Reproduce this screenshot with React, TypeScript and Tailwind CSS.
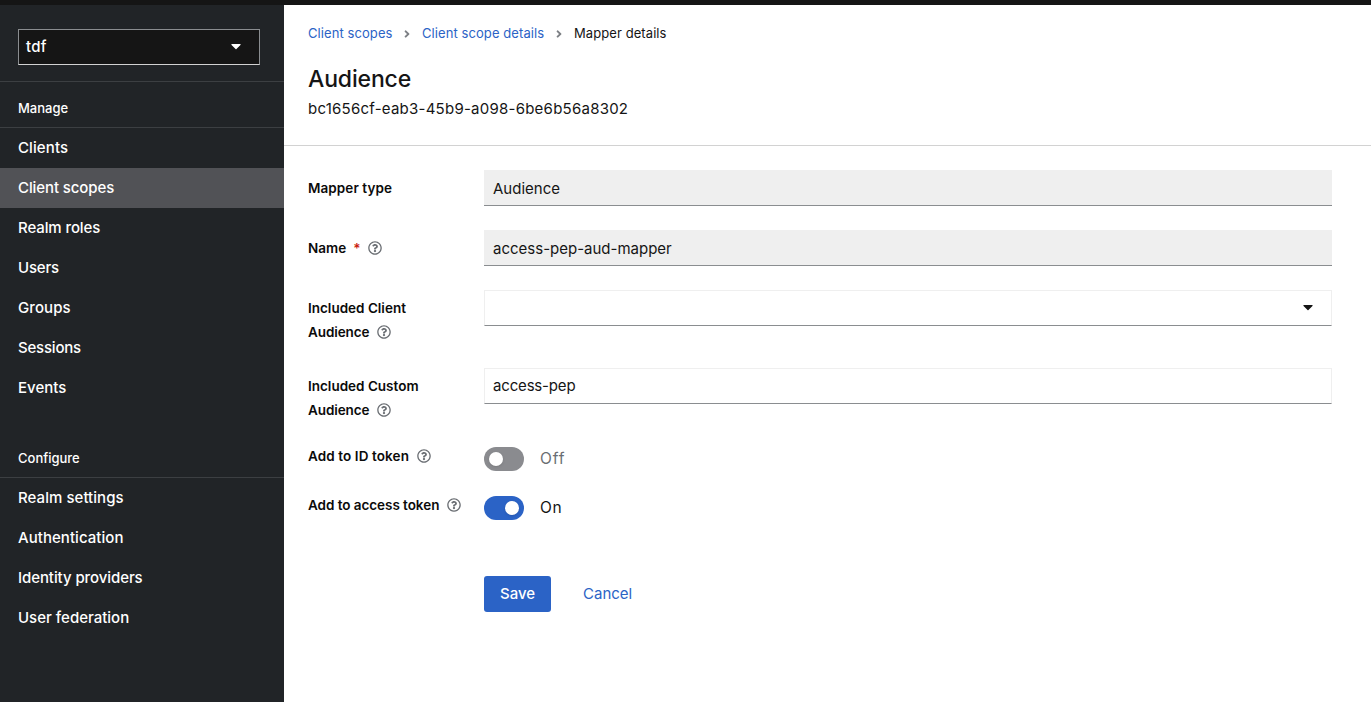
import type { ReactNode } from "react";
import { FaAngleRight, FaCaretDown, FaRegQuestionCircle } from "react-icons/fa";

type Item = { label: string; tracking?: string; active?: boolean };

const manage: Item[] = [
  { label: "Clients", tracking: "tracking-[0.1px]" },
  { label: "Client scopes", tracking: "tracking-[-0.1px]", active: true },
  { label: "Realm roles", tracking: "tracking-[-0.1px]" },
  { label: "Users", tracking: "tracking-[-0.2px]" },
  { label: "Groups", tracking: "tracking-[0.1px]" },
  { label: "Sessions", tracking: "tracking-[-0.2px]" },
  { label: "Events" },
];

const configure: Item[] = [
  { label: "Realm settings", tracking: "tracking-[0.05px]" },
  { label: "Authentication", tracking: "tracking-[0.05px]" },
  { label: "Identity providers", tracking: "tracking-[-0.08px]" },
  { label: "User federation" },
];

function NavSection({ title, items }: { title: string; items: Item[] }) {
  return (
    <section>
      <h2 className="h-[46px] border-b border-[#3c3f42] pl-[18px] pt-[14px] text-[13px] leading-[24px] font-medium">
        {title}
      </h2>
      <ul>
        {items.map((item) => (
          <li
            key={item.label}
            className={`flex h-10 items-center pl-[18px] text-[15px] font-medium ${item.active ? "bg-[#515256]" : ""}`}
          >
            <span className={item.tracking}>{item.label}</span>
          </li>
        ))}
      </ul>
    </section>
  );
}

function Help() {
  return <FaRegQuestionCircle className="inline-block size-[14px] shrink-0 text-[#6a6e73]" />;
}

function Row({ label, children, className }: { label: ReactNode; children: ReactNode; className: string }) {
  return (
    <div className={`flex ${className}`}>
      <div className="w-44 shrink-0 text-[13.5px] leading-6 font-semibold text-[#0b0b0b]">{label}</div>
      {children}
    </div>
  );
}

function Switch({ on }: { on: boolean }) {
  return (
    <div className="mt-[3px] flex h-6 items-center gap-4 text-[15.5px]">
      <span
        className={`flex h-6 w-10 items-center rounded-full px-[5px] ${on ? "justify-end bg-[#2b63c6]" : "bg-[#8a8b8f]"}`}
      >
        <span className="size-[14px] rounded-full bg-white shadow-sm" />
      </span>
      <span className={on ? "tracking-[0.6px] text-[#151515]" : "tracking-[0.9px] text-[#6a6e73]"}>
        {on ? "On" : "Off"}
      </span>
    </div>
  );
}

export default function App() {
  return (
    <div className="flex h-[702px] w-[1371px] flex-col overflow-hidden bg-white font-['Inter','Liberation_Sans',sans-serif] text-[#151515]">
      <header className="h-[5px] shrink-0 bg-[#151515]" />
      <div className="flex flex-1">
        <nav className="w-[284px] shrink-0 bg-[#212427] text-white">
          <div className="h-[77px] border-b border-[#3c3f42] pl-[18px] pt-6">
            <button className="flex h-9 w-[242px] items-center justify-between border border-[#8a8d90] border-b-[#d2d2d2] bg-[#151515] pr-[18px] pb-px pl-[7px] text-[15px] font-medium">
              <span className="pt-px tracking-[0.3px]">tdf</span>
              <FaCaretDown className="mb-px h-4 w-[10px]" />
            </button>
          </div>
          <NavSection title="Manage" items={manage} />
          <div className="h-6" />
          <NavSection title="Configure" items={configure} />
        </nav>
        <main className="flex-1">
          <div className="h-[141px] border-b border-[#d2d2d2] pl-6 pt-[19px]">
            <div className="flex h-5 items-center text-[13px] tracking-[0.08px]">
              <span className="w-[84px] whitespace-nowrap text-[#2b63c6]">Client scopes</span>
              <FaAngleRight className="mx-[9px] mb-px size-3 text-[#7d8085]" />
              <span className="w-[122px] whitespace-nowrap text-[#2b63c6]">Client scope details</span>
              <FaAngleRight className="mx-[9px] mb-px size-3 text-[#7d8085]" />
              <span>Mapper details</span>
            </div>
            <h1 className="mt-[20px] text-[23px] leading-[31px] font-medium tracking-[-0.15px]">Audience</h1>
            <p className="mt-[2px] text-[15px] leading-6 tracking-[0.24px]">bc1656cf-eab3-45b9-a098-6be6b56a8302</p>
          </div>
          <form className="pl-6 pt-6 text-[15px]">
            <Row
              label={<span className="block pt-1.5 tracking-[0.08px]">Mapper type</span>}
              className="h-[60px]"
            >
              <div className="h-9 w-[848px] border-b border-[#8a8d90] bg-[#efefef] pl-[9px] leading-[37px]">
                Audience
              </div>
            </Row>
            <Row
              label={
                <span className="flex items-center pt-1.5">
                  Name <span className="ml-[7px] mr-2 text-[#c9190b]">*</span>
                  <Help />
                </span>
              }
              className="h-[60px]"
            >
              <div className="h-9 w-[848px] border-b border-[#8a8d90] bg-[#efefef] pl-[9px] leading-[37px]">
                access-pep-aud-mapper
              </div>
            </Row>
            <Row
              label={
                <>
                  <span className="block pt-1.5">Included Client</span>
                  <span className="flex items-center gap-2 tracking-[-0.1px]">
                    Audience <Help />
                  </span>
                </>
              }
              className="h-[78px]"
            >
              <div className="flex h-9 w-[848px] items-center justify-end border border-[#efefef] border-b-[#8a8d90] pr-[18px] pb-0.5">
                <FaCaretDown className="h-4 w-[10px]" />
              </div>
            </Row>
            <Row
              label={
                <>
                  <span className="block pt-1.5">Included Custom</span>
                  <span className="flex items-center gap-2 tracking-[-0.1px]">
                    Audience <Help />
                  </span>
                </>
              }
              className="h-[76px]"
            >
              <div className="h-9 w-[848px] border border-[#efefef] border-b-[#8a8d90] pl-2 leading-[34px] tracking-[-0.17px]">
                access-pep
              </div>
            </Row>
            <Row
              label={
                <span className="flex items-center gap-2 tracking-[0.1px]">
                  Add to ID token <Help />
                </span>
              }
              className="h-[49px]"
            >
              <Switch on={false} />
            </Row>
            <Row
              label={
                <span className="flex items-center gap-2 tracking-[-0.05px]">
                  Add to access token <Help />
                </span>
              }
              className="h-[49px]"
            >
              <Switch on />
            </Row>
            <div className="flex pl-44 pt-[34px]">
              <button className="h-9 w-[67px] rounded-[3px] bg-[#2b63c6] font-medium text-white">Save</button>
              <button className="ml-8 text-[#2b63c6]">Cancel</button>
            </div>
          </form>
        </main>
      </div>
    </div>
  );
}
